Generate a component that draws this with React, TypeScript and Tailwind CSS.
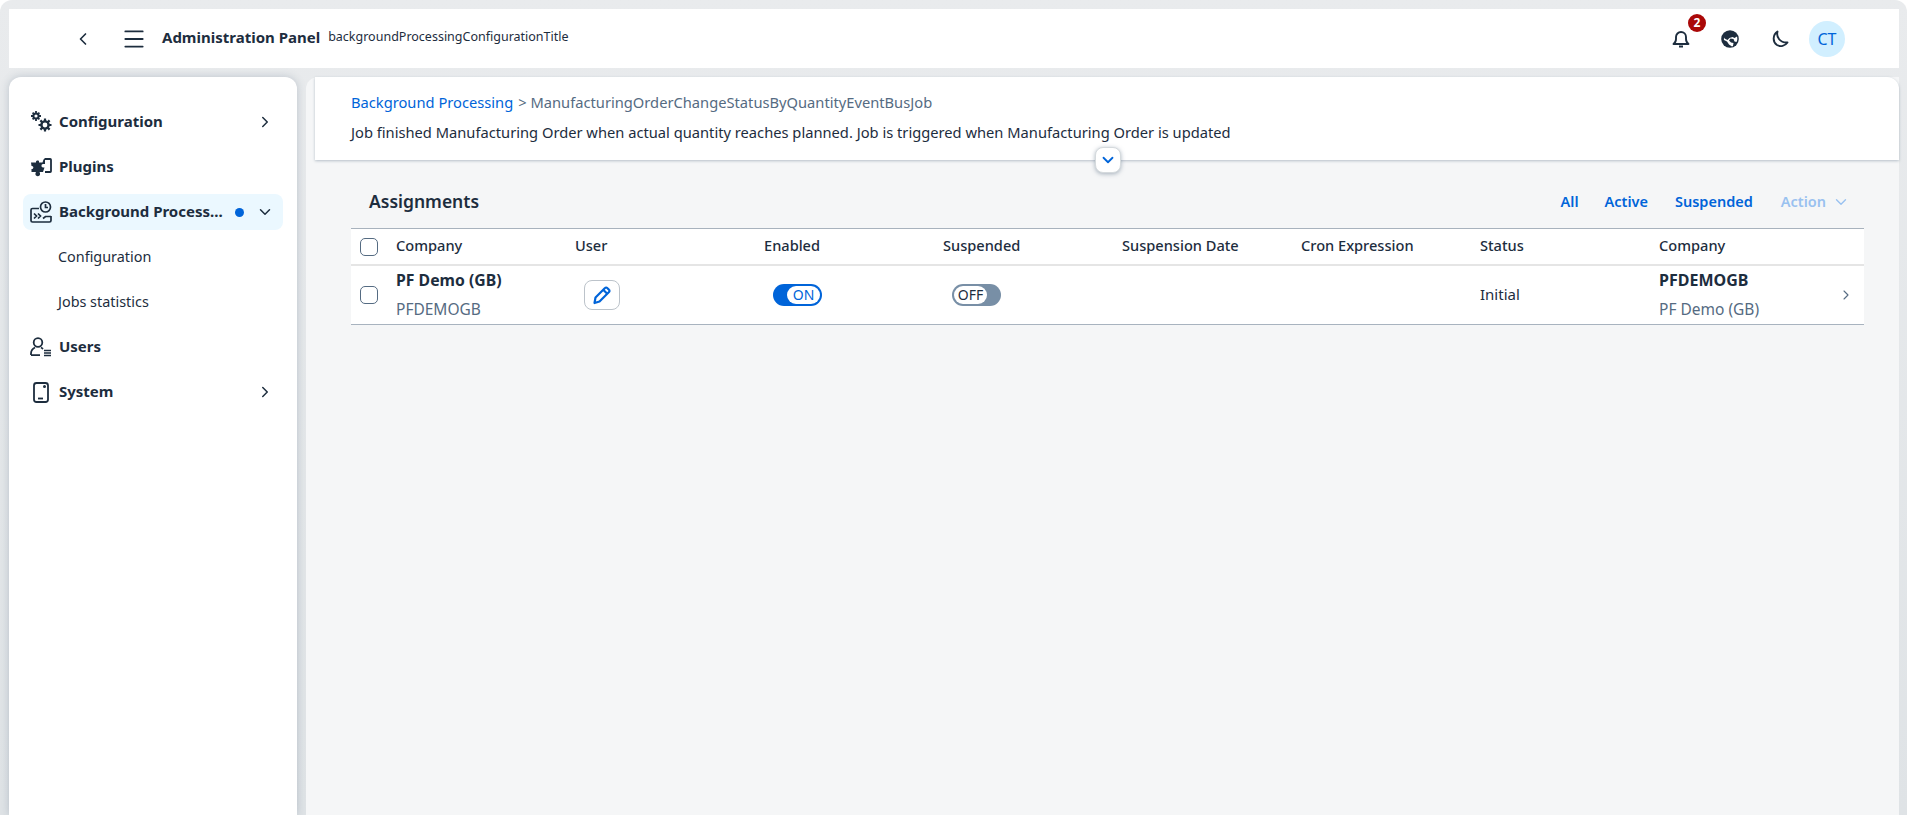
import type { ReactNode } from "react";
import { ChevronDown, ChevronLeft, ChevronRight, Menu } from "lucide-react";

const ink = "#1d2d3e";

function GearsIcon() {
  return (
    <svg width="22" height="24" viewBox="0 0 22 24" fill="none" stroke={ink}>
      <circle cx="6" cy="6" r="2.600" strokeWidth="2" />
      <path d="M6 1v2M6 9v2M1 6h2M9 6h2M2.600 2.600l1.200 1.200M8.200 8.200l1.200 1.200M9.400 2.600L8.200 3.800M3.800 8.200L2.600 9.400" strokeWidth="1.800" />
      <circle cx="15" cy="15" r="3.600" strokeWidth="2.400" />
      <path d="M15 8.500v2.500M15 19v2.500M8.500 15H11M19 15h2.500M10.400 10.400l1.800 1.800M17.800 17.800l1.800 1.800M19.600 10.400l-1.800 1.800M12.200 17.800l-1.800 1.800" strokeWidth="2.200" />
    </svg>
  );
}

function PluginIcon() {
  return (
    <svg width="22" height="22" viewBox="0 0 22 22">
      <path fill={ink} d="M1 6.500h5c-.5-2.500 3.500-2.500 3-.5v.5h3.500l1-3 1.500-1.500v6h-2c-2 0-2 3.500 0 3.500h1.500L13 16H9.500c.5 1 1 2.500 0 3.500s-2.500 1-3.500 0-.5-2.500 0-3.500H1.500v-3c2.500.5 2.500-3.500 0-3z" />
      <path fill="none" stroke={ink} strokeWidth="1.800" d="M15 3h5.200c.5 0 .8.3.8.8v11.400c0 .5-.3.8-.8.8H15" />
    </svg>
  );
}

function ProcessIcon() {
  return (
    <svg width="22" height="22" viewBox="0 0 22 22" fill="none" stroke={ink} strokeWidth="1.700">
      <path d="M9 7.500H2.500A1.500 1.500 0 0 0 1 9v10.500A1.500 1.500 0 0 0 2.500 21h17a1.500 1.500 0 0 0 1.500-1.500V15" />
      <circle cx="15.500" cy="6" r="5" />
      <path d="M15.500 3v3.500h2.500M4 12.500l2.500 2.500L4 17.500M8 12.500l2.500 2.500L8 17.500M13 17.500l2.500-2h5.500" />
    </svg>
  );
}

function UsersIcon() {
  return (
    <svg width="22" height="22" viewBox="0 0 22 22" fill="none" stroke={ink} strokeWidth="1.800">
      <circle cx="8" cy="6.500" r="4.300" />
      <path d="M1 19v-1.500c0-3 2-5 4-6M11 11.500c1 .5 1.500 1 2 1.500M1 19.200h9" />
      <path strokeWidth="1.300" d="M14 14.500h7M14 17h7M14 19.500h7" />
    </svg>
  );
}

function PhoneIcon() {
  return (
    <svg width="22" height="22" viewBox="0 0 22 22" fill="none" stroke={ink} strokeWidth="1.800">
      <rect x="4" y="2" width="14" height="19" rx="2.500" />
      <path d="M8 17.500h5" />
      <circle cx="14.500" cy="5.500" r=".6" fill={ink} />
    </svg>
  );
}

function BellIcon() {
  return (
    <svg width="18" height="18" viewBox="0 0 18 18" fill="none" stroke={ink} strokeWidth="1.900">
      <path d="M1.500 14c1.500-1 2.500-2.500 2.500-5V7a5 5 0 0 1 10 0v2c0 2.500 1 4 2.500 5z" strokeLinejoin="round" />
      <path d="M7 16.500h4" strokeWidth="2" />
    </svg>
  );
}

function GlobeIcon() {
  return (
    <svg width="18" height="18" viewBox="0 0 18 18">
      <circle cx="9" cy="9" r="8.800" fill={ink} />
      <path fill="#fff" d="M16 6.500c.6 2 .4 4-.5 5.500l-2-.5-1-2.500-3-.5-1.500 2 2 2 2.500.5-.5 3-1 .5-3-2-2-3-3-1.500c-.2-1 0-2 .2-2.500l.3 1 3 1.500 2-2 3-1 2 1z" />
    </svg>
  );
}

function MoonIcon() {
  return (
    <svg width="18" height="18" viewBox="0 0 18 18" fill="none" stroke={ink} strokeWidth="1.900">
      <path d="M6.500 1.500C5 7 9 13 16.500 12.500 14 16 9.500 17.200 6 15 1.500 12 1.500 5 6.500 1.500z" strokeLinejoin="round" />
    </svg>
  );
}

function PenIcon() {
  return (
    <svg width="20" height="20" viewBox="0 0 20 20" fill="none" stroke="#0064d9" strokeWidth="2.200">
      <path d="M2.500 18l1-5.500L13 3a1.500 1.500 0 0 1 2.200 0l1.800 1.800a1.500 1.500 0 0 1 0 2.200L7.500 16.500z" strokeLinejoin="round" />
      <path d="M11.500 5l3.500 3.500" />
    </svg>
  );
}

function Checkbox() {
  return <span className="block w-[18px] h-[18px] rounded-[5px] border border-[#556b82] bg-white" />;
}

function NavItem({ icon, label, chevron }: { icon: ReactNode; label: string; chevron?: boolean }) {
  return (
    <div className="h-[36px] mx-[14px] pl-[6px] pr-[7px] flex items-center rounded-lg">
      <span className="w-[24px] h-[24px] flex items-center justify-center mr-[6px]">{icon}</span>
      <span className="flex-1 text-[15px] font-bold -mt-[2px]">{label}</span>
      {chevron && <ChevronRight size={18} strokeWidth={2} className="mr-[2px]" />}
    </div>
  );
}

const columns = ["Company", "User", "Enabled", "Suspended", "Suspension Date", "Cron Expression", "Status", "Company"];

export default function App() {
  return (
    <div className="h-screen overflow-hidden bg-white font-['Noto_Sans',sans-serif] text-[#1d2d3e]">
      <div className="h-full rounded-t-xl bg-gradient-to-b from-[#e9ebed] to-[#dfe3e6] pt-[9px] pl-[9px] pr-[8px] flex flex-col">
        {/* Shell bar */}
        <header className="h-[59px] shrink-0 bg-white flex items-center mb-[9px]">
          <ChevronLeft size={20} strokeWidth={2} className="ml-[64px]" />
          <Menu size={26} strokeWidth={1.700} className="ml-[28px]" />
          <span className="ml-[15px] text-[15px] font-bold -mt-[2px]">Administration Panel</span>
          <span className="ml-[8px] text-[12.5px] -mt-[2px]">backgroundProcessingConfigurationTitle</span>
          <div className="ml-auto flex items-center mr-[54px]">
            <span className="relative w-[18px] h-[18px]">
              <BellIcon />
              <span className="absolute -top-[16px] left-[16px] w-[18px] h-[18px] rounded-full bg-[#aa0808] text-white text-[12px] font-bold flex items-center justify-center">
                2
              </span>
            </span>
            <span className="ml-[31px] h-[18px]"><GlobeIcon /></span>
            <span className="ml-[32px] h-[18px]"><MoonIcon /></span>
            <span className="ml-[20px] w-[36px] h-[36px] rounded-full bg-[#d1efff] text-[#0064d9] text-[16px] flex items-center justify-center">
              CT
            </span>
          </div>
        </header>

        <div className="flex-1 min-h-0 flex">
          {/* Sidebar */}
          <aside className="w-[288px] shrink-0 bg-white rounded-t-xl pt-[27px] flex flex-col gap-[9px] shadow-[0_0_8px_rgba(85,107,130,0.3)]">
            <NavItem icon={<GearsIcon />} label="Configuration" chevron />
            <NavItem icon={<PluginIcon />} label="Plugins" />
            <div className="h-[36px] mx-[14px] pl-[6px] pr-[7px] flex items-center rounded-lg bg-[#ebf8ff]">
              <span className="w-[24px] h-[24px] flex items-center justify-center mr-[6px]"><ProcessIcon /></span>
              <span className="flex-1 text-[15px] font-bold truncate -mt-[2px]">Background Process...</span>
              <span className="w-[9px] h-[9px] rounded-full bg-[#0064d9] ml-[8px] mr-[12px]" />
              <ChevronDown size={18} strokeWidth={2} className="mr-[2px]" />
            </div>
            <div className="h-[36px] pl-[49px] flex items-center text-[14.4px]">Configuration</div>
            <div className="h-[36px] pl-[49px] flex items-center text-[14.4px]">Jobs statistics</div>
            <NavItem icon={<UsersIcon />} label="Users" />
            <NavItem icon={<PhoneIcon />} label="System" chevron />
          </aside>

          {/* Main */}
          <main className="relative ml-[9px] flex-1 min-w-0 bg-[#f5f6f7] rounded-tl-xl">
            <div className="relative ml-[9px] h-[83px] bg-white rounded-tr-xl px-[36px] pt-[13px] shadow-[0_1px_3px_rgba(85,107,130,0.4)] text-[14.7px]">
              <div className="h-[24px] flex items-center">
                <span className="text-[#0064d9]">Background Processing</span>
                <span className="ml-[5px] text-[#556b82]">&gt; ManufacturingOrderChangeStatusByQuantityEventBusJob</span>
              </div>
              <div className="mt-[6px] h-[24px] flex items-center">
                Job finished Manufacturing Order when actual quantity reaches planned. Job is triggered when Manufacturing Order is updated
              </div>
              <button className="absolute left-[780px] top-[70px] w-[26px] h-[26px] rounded-lg bg-white border border-[#d5dadd] shadow-[0_1px_4px_rgba(85,107,130,0.5)] flex items-center justify-center">
                <ChevronDown size={18} strokeWidth={2.4} className="text-[#0064d9]" />
              </button>
            </div>

            <div className="ml-[45px] mr-[35px]">
              <div className="h-[52px] mt-[16px] pl-[18px] pr-[14px] flex items-center">
                <h2 className="text-[17.5px] font-semibold -mt-[2px]">Assignments</h2>
                <div className="ml-auto flex items-center text-[14.5px] font-semibold text-[#0064d9]">
                  <span>All</span>
                  <span className="ml-[26px]">Active</span>
                  <span className="ml-[27px]">Suspended</span>
                  <span className="ml-[28px] text-[#99c1f0] flex items-center">
                    Action <ChevronDown size={18} strokeWidth={1.8} className="ml-[6px]" />
                  </span>
                </div>
              </div>

              <div className="bg-white border-t border-t-[#a8b2bd] border-b border-b-[#a8b3bf] grid grid-cols-[45px_179px_189px_179px_179px_179px_179px_179px_1fr]">
                <div className="h-[37px] pl-[9px] flex items-center border-b-2 border-[#e5e5e5]"><Checkbox /></div>
                {columns.map((c, i) => (
                  <div key={i} className="h-[37px] pb-[2px] flex items-center text-[14.6px] font-medium border-b-2 border-[#e5e5e5]">{c}</div>
                ))}

                <div className="h-[58px] pl-[9px] flex items-center"><Checkbox /></div>
                <div className="h-[58px] pb-[2px] flex flex-col justify-center">
                  <div className="text-[15.8px] font-bold leading-[20px]">PF Demo (GB)</div>
                  <div className="text-[15.5px] text-[#556b82] leading-[20px] mt-[9px]">PFDEMOGB</div>
                </div>
                <div className="h-[58px] flex items-center">
                  <button className="ml-[9px] w-[36px] h-[30px] rounded-lg bg-white border border-[#bcc3ca] flex items-center justify-center">
                    <PenIcon />
                  </button>
                </div>
                <div className="h-[58px] flex items-center">
                  <span className="ml-[9px] w-[49px] h-[22px] rounded-full bg-[#0064d9] flex justify-end items-center p-[2px]">
                    <span className="w-[33px] h-[18px] rounded-full bg-white text-[#0064d9] text-[14px] leading-none flex items-center justify-center">ON</span>
                  </span>
                </div>
                <div className="h-[58px] flex items-center">
                  <span className="ml-[9px] w-[49px] h-[22px] rounded-full bg-[#788fa6] flex items-center p-[2px]">
                    <span className="w-[33px] h-[18px] rounded-full bg-white text-[#1d2d3e] text-[14px] leading-none flex items-center justify-center">OFF</span>
                  </span>
                </div>
                <div />
                <div />
                <div className="h-[58px] pb-[2px] flex items-center text-[15px]">Initial</div>
                <div className="relative h-[58px] pb-[2px] flex flex-col justify-center">
                  <div className="text-[16px] font-bold leading-[20px]">PFDEMOGB</div>
                  <div className="text-[15.5px] text-[#556b82] leading-[20px] mt-[9px]">PF Demo (GB)</div>
                  <ChevronRight size={16} strokeWidth={1.6} className="absolute right-[10px] top-[21px] text-[#556b82]" />
                </div>
              </div>
            </div>
          </main>
        </div>
      </div>
    </div>
  );
}
